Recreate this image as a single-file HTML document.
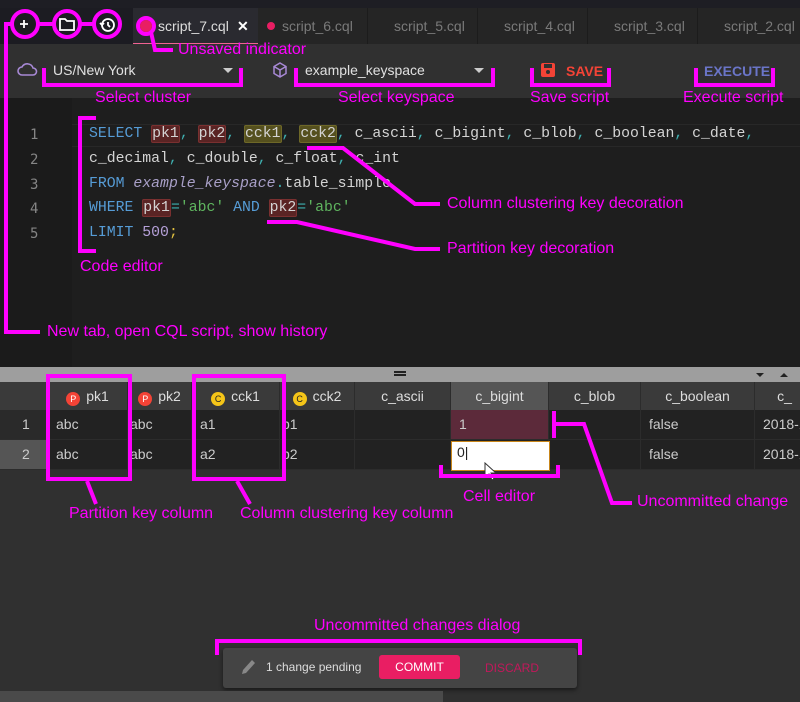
<!DOCTYPE html>
<html><head><meta charset="utf-8"><style>
*{margin:0;padding:0;box-sizing:border-box}
body{width:800px;height:702px;overflow:hidden;background:#303030;font-family:"Liberation Sans",sans-serif;position:relative}
.a{position:absolute}
.t{position:absolute;color:#ff00ff;font-size:16px;white-space:nowrap}
.code{position:absolute;left:89px;font-family:"Liberation Mono","DejaVu Sans Mono",monospace;font-size:14.8px;color:#d4d4d4;white-space:pre}
.ln{position:absolute;left:30px;font-family:"DejaVu Sans Mono",monospace;font-size:14px;color:#858585}
.kw{color:#569cd6}.pk{background:#5a2424;border:1px solid #7a3030;border-radius:2px}.ck{background:#55501e;border:1px solid #6e6828;border-radius:2px}
.str{color:#5fb55f}.num{color:#b5a0d8}.c{color:#3fb0b0}
.tab{position:absolute;top:8px;height:36px;background:#252525;color:#7a7a7a;font-size:14px;line-height:36px;padding-left:24px;border-right:1px solid #1c1c1c}
.hd{position:absolute;top:382px;height:28px;background:#3a3a3a;color:#ddd;font-size:14px;line-height:28px;text-align:center;border-right:1px solid #2c2c2c}
.cl{position:absolute;height:30px;color:#ccc;font-size:14px;line-height:28px;padding-left:8px;border-right:1px solid #2c2c2c;border-bottom:1px solid #2c2c2c;background:#222}
.dot{display:inline-block;width:14px;height:14px;border-radius:50%;font-size:9px;line-height:14px;text-align:center;color:#222;vertical-align:-1px;margin-right:6px}
</style></head><body>
<div class="a" style="left:0;top:0;width:800px;height:8px;background:#1e1e24"></div>
<div class="a" style="left:0;top:8px;width:800px;height:36px;background:#1c1c22"></div>
<div class="a" style="left:133px;top:8px;width:125px;height:36px;background:#2a2a30;border-bottom:1px solid #f06292"></div>
<div class="a" style="left:158px;top:8px;line-height:36px;color:#ddd;font-size:14px">script_7.cql</div>
<div class="a" style="left:237px;top:8px;line-height:36px;color:#fff;font-size:14px;font-weight:bold">✕</div>
<div class="a" style="left:140px;top:20px;width:12px;height:12px;border-radius:50%;background:#e91e63"></div>
<div class="tab" style="left:258px;width:110px">script_6.cql</div>
<div class="a" style="left:267px;top:22px;width:8px;height:8px;border-radius:50%;background:#e91e63"></div>
<div class="tab" style="left:368px;width:110px;padding-left:26px">script_5.cql</div>
<div class="tab" style="left:478px;width:110px;padding-left:26px">script_4.cql</div>
<div class="tab" style="left:588px;width:110px;padding-left:26px">script_3.cql</div>
<div class="tab" style="left:698px;width:110px;padding-left:26px">script_2.cql</div>
<svg class="a" style="left:0;top:0" width="130" height="50">
<g stroke="#fff" stroke-width="1.8" fill="none"><path d="M20 24h8M24 20v8"/><path d="M60 19h5l2 2h7v9H60z"/><circle cx="108" cy="25" r="6"/><path d="M108 22v3l2 2"/><path d="M100 23l2 2 2-2"/></g>
<g stroke="#ff00ff" stroke-width="4" fill="none"><circle cx="25" cy="24" r="13"/><circle cx="67" cy="24" r="13"/><circle cx="107" cy="24" r="13"/><path d="M38 24h16M80 24h14M6 24h6"/></g></svg>
<div class="a" style="left:0;top:44px;width:800px;height:54px;background:#303030"></div>
<svg class="a" style="left:17px;top:62px" width="22" height="16"><path d="M5 13a4 4 0 010-8 6 6 0 0111 1 3.5 3.5 0 010 7z" stroke="#a889d6" stroke-width="1.6" fill="none"/></svg>
<div class="a" style="left:53px;top:62px;color:#e0e0e0;font-size:14px">US/New York</div>
<div class="a" style="left:223px;top:68px;border:5px solid transparent;border-top-color:#ccc"></div>
<svg class="a" style="left:272px;top:62px" width="16" height="16"><path d="M8 1l6 3.5v7L8 15l-6-3.5v-7zM2 4.5L8 8l6-3.5M8 8v7" stroke="#a889d6" stroke-width="1.5" fill="none"/></svg>
<div class="a" style="left:305px;top:62px;color:#e0e0e0;font-size:14px">example_keyspace</div>
<div class="a" style="left:474px;top:68px;border:5px solid transparent;border-top-color:#ccc"></div>
<div class="a" style="left:541px;top:63px;width:14px;height:14px;background:#f44336;border-radius:2px"></div>
<div class="a" style="left:544px;top:64px;width:8px;height:4px;background:#303030"></div>
<div class="a" style="left:546px;top:70px;width:4px;height:4px;border-radius:50%;background:#303030"></div>
<div class="a" style="left:566px;top:63px;color:#f44336;font-size:14px;font-weight:bold">SAVE</div>
<div class="a" style="left:704px;top:63px;color:#6a75c8;font-size:14px;font-weight:bold">EXECUTE</div>
<div class="a" style="left:0;top:98px;width:800px;height:269px;background:#1e1e1e"></div>
<div class="a" style="left:0;top:98px;width:72px;height:269px;background:#1b1b1b"></div>
<div class="a" style="left:72px;top:124px;width:728px;height:23px;border-top:1px solid #282828;border-bottom:1px solid #282828"></div>
<div class="ln" style="top:127px">1</div><div class="ln" style="top:152px">2</div><div class="ln" style="top:177px">3</div><div class="ln" style="top:201px">4</div><div class="ln" style="top:226px">5</div>
<div class="code" style="top:126px"><span class="kw">SELECT</span> <span class="pk">pk1</span><span class="c">,</span> <span class="pk">pk2</span><span class="c">,</span> <span class="ck">cck1</span><span class="c">,</span> <span class="ck">cck2</span><span class="c">,</span> c_ascii<span class="c">,</span> c_bigint<span class="c">,</span> c_blob<span class="c">,</span> c_boolean<span class="c">,</span> c_date<span class="c">,</span></div>
<div class="code" style="top:151px">c_decimal<span class="c">,</span> c_double<span class="c">,</span> c_float<span class="c">,</span> c_int</div>
<div class="code" style="top:176px"><span class="kw">FROM</span> <i style="color:#a9a0c8">example_keyspace</i><span class="c">.</span>table_simple</div>
<div class="code" style="top:200px"><span class="kw">WHERE</span> <span class="pk">pk1</span><span class="c">=</span><span class="str">'abc'</span> <span class="kw">AND</span> <span class="pk">pk2</span><span class="c">=</span><span class="str">'abc'</span></div>
<div class="code" style="top:225px"><span class="kw">LIMIT</span> <span class="num">500</span><span style="color:#e0c040">;</span></div>
<div class="a" style="left:0;top:367px;width:800px;height:15px;background:#9e9e9e"></div>
<div class="a" style="left:394px;top:371px;width:12px;height:2px;background:#222;box-shadow:0 3px 0 #222"></div>
<div class="a" style="left:756px;top:373px;border:4px solid transparent;border-top-color:#222"></div>
<div class="a" style="left:780px;top:369px;border:4px solid transparent;border-bottom-color:#222"></div>
<div class="hd" style="left:0;width:48px"></div>
<div class="hd" style="left:48px;width:80px"><span class="dot" style="background:#f44336;color:#fff">P</span>pk1</div>
<div class="hd" style="left:128px;width:64px"><span class="dot" style="background:#f44336;color:#fff">P</span>pk2</div>
<div class="hd" style="left:192px;width:88px"><span class="dot" style="background:#f5c518">C</span>cck1</div>
<div class="hd" style="left:280px;width:75px"><span class="dot" style="background:#f5c518">C</span>cck2</div>
<div class="hd" style="left:355px;width:96px">c_ascii</div>
<div class="hd" style="left:451px;width:98px;background:#555">c_bigint</div>
<div class="hd" style="left:549px;width:92px">c_blob</div>
<div class="hd" style="left:641px;width:114px">c_boolean</div>
<div class="hd" style="left:755px;width:60px">c_</div>
<div class="cl" style="left:0;top:410px;width:48px;padding-left:22px;background:#2a2a2a">1</div>
<div class="cl" style="left:0;top:440px;width:48px;padding-left:22px;background:#555">2</div>
<div class="cl" style="left:48px;top:410px;width:80px">abc</div><div class="cl" style="left:48px;top:440px;width:80px">abc</div>
<div class="cl" style="left:128px;top:410px;width:64px;padding-left:2px">abc</div><div class="cl" style="left:128px;top:440px;width:64px;padding-left:2px">abc</div>
<div class="cl" style="left:192px;top:410px;width:88px">a1</div><div class="cl" style="left:192px;top:440px;width:88px">a2</div>
<div class="cl" style="left:280px;top:410px;width:75px;padding-left:2px">b1</div><div class="cl" style="left:280px;top:440px;width:75px;padding-left:2px">b2</div>
<div class="cl" style="left:355px;top:410px;width:96px"></div><div class="cl" style="left:355px;top:440px;width:96px"></div>
<div class="cl" style="left:451px;top:410px;width:98px;background:#5c2a3a">1</div><div class="cl" style="left:451px;top:440px;width:98px"></div>
<div class="cl" style="left:549px;top:410px;width:92px"></div><div class="cl" style="left:549px;top:440px;width:92px"></div>
<div class="cl" style="left:641px;top:410px;width:114px">false</div><div class="cl" style="left:641px;top:440px;width:114px">false</div>
<div class="cl" style="left:755px;top:410px;width:60px">2018-1</div><div class="cl" style="left:755px;top:440px;width:60px">2018-1</div>
<div class="a" style="left:451px;top:441px;width:99px;height:30px;background:#fff;border:1px solid #c8861a;color:#222;font-size:14px;padding:2px 0 0 5px">0|</div>
<svg class="a" style="left:484px;top:462px" width="14" height="20"><path d="M1 1v15l4-4 3 6 2-1-3-6h5z" fill="#fff" stroke="#333"/></svg>
<div class="a" style="left:223px;top:648px;width:354px;height:40px;background:#444;border-radius:3px;box-shadow:0 2px 4px rgba(0,0,0,.5)"></div>
<svg class="a" style="left:240px;top:658px" width="16" height="18"><path d="M2 16l1-4 9-10 3 3-9 10z" fill="#888"/></svg>
<div class="a" style="left:266px;top:660px;color:#ddd;font-size:12px">1 change pending</div>
<div class="a" style="left:379px;top:655px;width:81px;height:24px;background:#e91e63;border-radius:3px;color:#fff;font-size:12px;line-height:24px;text-align:center">COMMIT</div>
<div class="a" style="left:485px;top:661px;color:#c2185b;font-size:12px">DISCARD</div>
<div class="a" style="left:0;top:691px;width:443px;height:11px;background:#4a4a4a"></div>
<svg class="a" style="left:0;top:0" width="800" height="702"><g stroke="#ff00ff" stroke-width="4" fill="none">
<circle cx="146" cy="26" r="8"/><path d="M151 32l4 18h18"/>
<path d="M6 22v310h34"/>
<path d="M44 68v17h197v-17M296 68v17h197v-17M532 68v17h77v-17M696 68v17h77v-17"/>
<path d="M96 118H80v133h16"/>
<path d="M307 148h36l72 56h25M267 222h30l118 27h25"/>
<rect x="48" y="376" width="82" height="103"/><rect x="194" y="376" width="90" height="103"/>
<path d="M87 481l9 23M237 481l13 23"/>
<path d="M441 465v11h117v-11"/>
<path d="M554 411v27M554 424h30l28 79h20"/>
<path d="M217 655v-14h363v14"/></g></svg>
<div class="t" style="left:178px;top:41px">Unsaved indicator</div>
<div class="t" style="left:95px;top:89px">Select cluster</div>
<div class="t" style="left:338px;top:89px">Select keyspace</div>
<div class="t" style="left:530px;top:89px">Save script</div>
<div class="t" style="left:683px;top:89px">Execute script</div>
<div class="t" style="left:447px;top:195px">Column clustering key decoration</div>
<div class="t" style="left:447px;top:240px">Partition key decoration</div>
<div class="t" style="left:80px;top:258px">Code editor</div>
<div class="t" style="left:47px;top:323px">New tab, open CQL script, show history</div>
<div class="t" style="left:463px;top:488px">Cell editor</div>
<div class="t" style="left:637px;top:493px">Uncommitted change</div>
<div class="t" style="left:69px;top:505px">Partition key column</div>
<div class="t" style="left:240px;top:505px">Column clustering key column</div>
<div class="t" style="left:314px;top:617px">Uncommitted changes dialog</div>
</body></html>
